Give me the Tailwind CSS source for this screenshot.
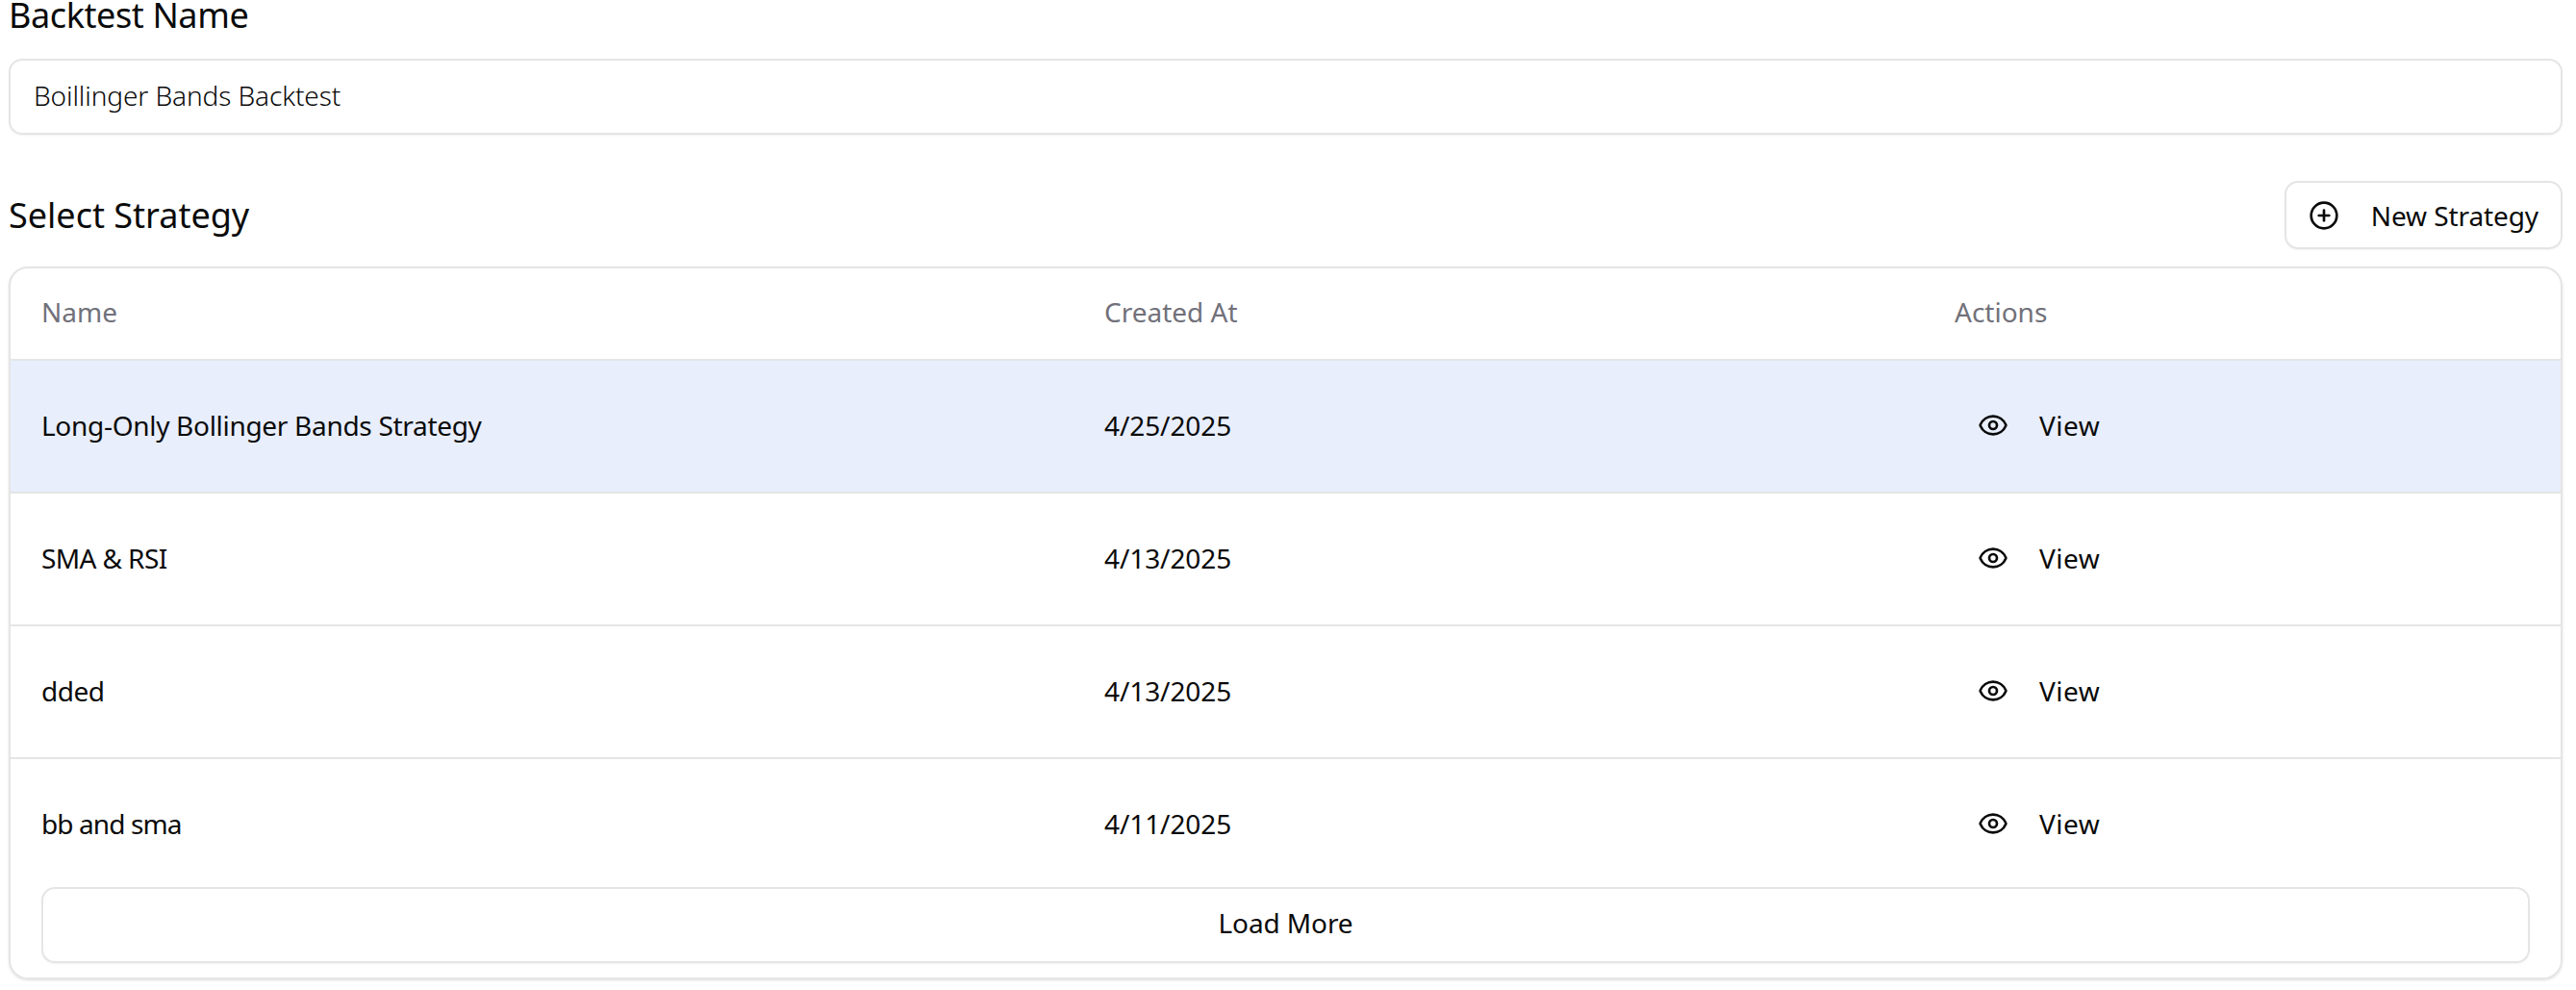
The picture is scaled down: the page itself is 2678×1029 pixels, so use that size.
<!DOCTYPE html>
<html lang="en">
  <head>
    <meta charset="UTF-8" />
    <title>New Backtest</title>
    <script src="https://cdn.jsdelivr.net/npm/@tailwindcss/browser@4"></script>
  </head>
  <body class="bg-white text-[#0a0a0a] font-['Noto_Sans',sans-serif] text-[28px] leading-[40px]">
    <div class="h-[1029px] overflow-hidden pl-[9px] pr-[14px]">
      <!-- Backtest name -->
      <h2 class="text-[36px] leading-[32px] h-[61px] tracking-[-0.4px]">Backtest Name</h2>
      <input type="text" value="Boillinger Bands Backtest" class="block w-full h-[79px] px-[24px] pb-[3px] border-2 border-[#e5e5e5] rounded-[14px] text-[28px] font-light tracking-[-0.1px] shadow-xs outline-none" />

      <!-- Strategy header -->
      <div class="flex justify-between items-center h-[71px] mt-[48px]">
        <h2 class="text-[36px] leading-[40px]">Select Strategy</h2>
        <button class="flex items-center h-[71px] px-[23px] gap-[33px] border-2 border-[#e5e5e5] rounded-[14px] shadow-xs tracking-[-0.1px]">
          <svg class="w-[32px] h-[32px]" viewBox="0 0 24 24" fill="none" stroke="currentColor" stroke-width="2" stroke-linecap="round" stroke-linejoin="round"><circle cx="12" cy="12" r="10"/><path d="M8 12h8"/><path d="M12 8v8"/></svg>
          New Strategy
        </button>
      </div>

      <!-- Strategy table -->
      <div class="mt-[18px] h-[741px] border-2 border-[#e5e5e5] rounded-[20px] shadow-sm overflow-hidden">
        <div class="grid grid-cols-[1105px_884px_1fr] items-center h-[96px] pb-[5px] border-b-2 border-[#e5e5e5] text-[#71717a]">
          <div class="pl-[32px]">Name</div>
          <div class="pl-[32px]">Created At</div>
          <div class="pl-[32px]">Actions</div>
        </div>

        <div class="grid grid-cols-[1105px_884px_1fr] items-center h-[138px] pb-[2px] border-b-2 border-[#e5e5e5] bg-[#e8eefc]">
          <div class="pl-[32px] tracking-[-0.3px]">Long-Only Bollinger Bands Strategy</div>
          <div class="pl-[32px] tracking-[-0.1px]">4/25/2025</div>
          <div class="pl-[56px] flex items-center gap-[32px] tracking-[0.5px]">
            <svg class="w-[32px] h-[32px]" viewBox="0 0 24 24" fill="none" stroke="currentColor" stroke-width="2" stroke-linecap="round" stroke-linejoin="round"><path d="M2.062 12.348a1 1 0 0 1 0-.696 10.75 10.75 0 0 1 19.876 0 1 1 0 0 1 0 .696 10.75 10.75 0 0 1-19.876 0"/><circle cx="12" cy="12" r="3"/></svg>
            View
          </div>
        </div>

        <div class="grid grid-cols-[1105px_884px_1fr] items-center h-[138px] pb-[2px] border-b-2 border-[#e5e5e5]">
          <div class="pl-[32px] tracking-[-0.6px]">SMA &amp; RSI</div>
          <div class="pl-[32px] tracking-[-0.1px]">4/13/2025</div>
          <div class="pl-[56px] flex items-center gap-[32px] tracking-[0.5px]">
            <svg class="w-[32px] h-[32px]" viewBox="0 0 24 24" fill="none" stroke="currentColor" stroke-width="2" stroke-linecap="round" stroke-linejoin="round"><path d="M2.062 12.348a1 1 0 0 1 0-.696 10.75 10.75 0 0 1 19.876 0 1 1 0 0 1 0 .696 10.75 10.75 0 0 1-19.876 0"/><circle cx="12" cy="12" r="3"/></svg>
            View
          </div>
        </div>

        <div class="grid grid-cols-[1105px_884px_1fr] items-center h-[138px] pb-[2px] border-b-2 border-[#e5e5e5]">
          <div class="pl-[32px] tracking-[-0.5px]">dded</div>
          <div class="pl-[32px] tracking-[-0.1px]">4/13/2025</div>
          <div class="pl-[56px] flex items-center gap-[32px] tracking-[0.5px]">
            <svg class="w-[32px] h-[32px]" viewBox="0 0 24 24" fill="none" stroke="currentColor" stroke-width="2" stroke-linecap="round" stroke-linejoin="round"><path d="M2.062 12.348a1 1 0 0 1 0-.696 10.75 10.75 0 0 1 19.876 0 1 1 0 0 1 0 .696 10.75 10.75 0 0 1-19.876 0"/><circle cx="12" cy="12" r="3"/></svg>
            View
          </div>
        </div>

        <div class="grid grid-cols-[1105px_884px_1fr] items-center h-[133px]">
          <div class="pl-[32px] tracking-[-0.9px]">bb and sma</div>
          <div class="pl-[32px] tracking-[-0.1px]">4/11/2025</div>
          <div class="pl-[56px] flex items-center gap-[32px] tracking-[0.5px]">
            <svg class="w-[32px] h-[32px]" viewBox="0 0 24 24" fill="none" stroke="currentColor" stroke-width="2" stroke-linecap="round" stroke-linejoin="round"><path d="M2.062 12.348a1 1 0 0 1 0-.696 10.75 10.75 0 0 1 19.876 0 1 1 0 0 1 0 .696 10.75 10.75 0 0 1-19.876 0"/><circle cx="12" cy="12" r="3"/></svg>
            View
          </div>
        </div>

        <div class="px-[32px]">
          <button class="block w-full h-[79px] pb-[5px] border-2 border-[#e5e5e5] rounded-[14px] shadow-xs tracking-[-0.1px]">Load More</button>
        </div>
      </div>
    </div>
  </body>
</html>
